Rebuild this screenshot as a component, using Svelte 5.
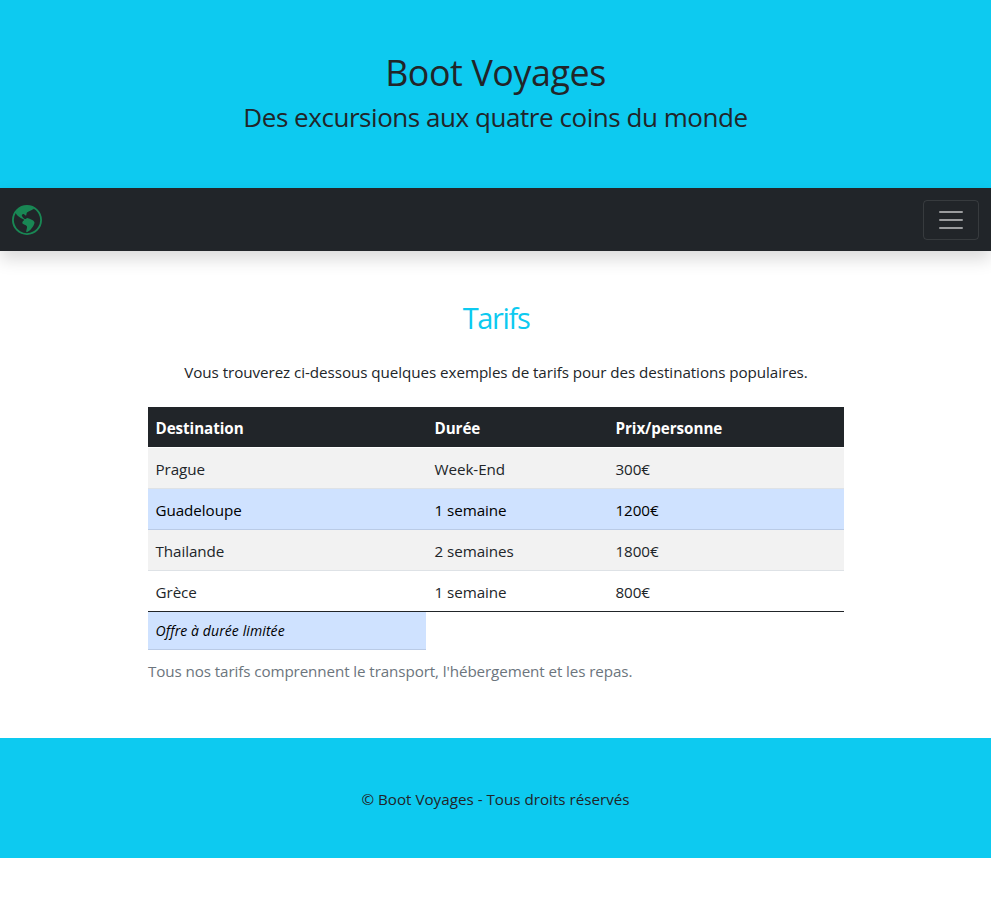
<script>
  const offers = [
    { place: 'Prague', length: 'Week-End', price: '300€' },
    { place: 'Guadeloupe', length: '1 semaine', price: '1200€', limited: true },
    { place: 'Thailande', length: '2 semaines', price: '1800€' },
    { place: 'Grèce', length: '1 semaine', price: '800€' }
  ];
</script>

<header>
  <h1>Boot Voyages</h1>
  <p>Des excursions aux quatre coins du monde</p>
</header>

<nav>
  <a href="#accueil" aria-label="Accueil">
    <svg width="30" height="30" viewBox="0 0 16 16" fill="currentColor">
      <path d="M8 0a8 8 0 1 0 0 16A8 8 0 0 0 8 0ZM2.04 4.326c.325 1.329 2.532 2.54 3.717 3.19.48.263.793.434.743.484-.08.08-.162.158-.242.234-.416.396-.787.749-.758 1.266.035.634.618.824 1.214 1.017.577.188 1.168.38 1.286.983.082.417-.075.988-.22 1.52-.215.782-.406 1.48.22 1.48 1.5-.5 3.798-3.186 4-5 .138-1.243-2-2-3.5-2.5-.478-.16-.755.081-.99.284-.172.15-.322.279-.51.216-.445-.148-2.5-2-1.5-2.5.78-.39.952-.171 1.227.182.078.099.163.208.273.318.609.304.662-.132.723-.633.039-.322.081-.671.277-.867.434-.434 1.265-.791 2.028-1.12.712-.306 1.365-.587 1.579-.88A7 7 0 1 1 2.04 4.327Z" />
    </svg>
  </a>
  <button aria-label="Menu">
    <svg width="30" height="30" viewBox="0 0 30 30" fill="none" stroke="rgba(255,255,255,.55)" stroke-width="2" stroke-linecap="round">
      <path d="M4 7h22M4 15h22M4 23h22" />
    </svg>
  </button>
</nav>

<main>
  <h2>Tarifs</h2>
  <p class="intro">Vous trouverez ci-dessous quelques exemples de tarifs pour des destinations populaires.</p>
  <table>
    <caption>Tous nos tarifs comprennent le transport, l'hébergement et les repas.</caption>
    <colgroup><col class="place" /><col class="length" /><col /></colgroup>
    <thead>
      <tr><th>Destination</th><th>Durée</th><th>Prix/personne</th></tr>
    </thead>
    <tbody>
      {#each offers as offer}
        <tr class:limited={offer.limited}>
          <td>{offer.place}</td><td>{offer.length}</td><td>{offer.price}</td>
        </tr>
      {/each}
    </tbody>
    <tfoot>
      <tr><td class="note">Offre à durée limitée</td></tr>
    </tfoot>
  </table>
</main>

<footer>© Boot Voyages - Tous droits réservés</footer>

<style>
  :global(body) {
    margin: 0;
    background: #fff;
    color: #212529;
    font: 15.2px/24px 'Open Sans', 'Noto Sans', sans-serif;
    letter-spacing: -0.06px;
  }
  h1, h2, p { margin: 0; font-weight: 400; }
  header {
    box-sizing: border-box;
    height: 188px;
    padding-top: 48px;
    background: #0dcaf0;
    text-align: center;
  }
  h1 { height: 52px; font-size: 35.8px; line-height: 48px; letter-spacing: -0.4px; }
  header p { font-size: 26px; line-height: 34px; letter-spacing: -0.45px; }
  nav {
    position: relative;
    display: flex;
    align-items: center;
    justify-content: space-between;
    box-sizing: border-box;
    height: 63px;
    padding: 1px 12px 0;
    background: #212529;
    box-shadow: 0 8px 16px rgba(0, 0, 0, .15);
  }
  nav a { display: flex; color: #198754; }
  nav svg { display: block; }
  button {
    width: 56px;
    height: 40px;
    padding: 4px 12px;
    border: 1px solid rgba(255, 255, 255, .1);
    border-radius: 4px;
    background: transparent;
  }
  main { width: 696px; margin: 0 auto; padding: 48px 0; position: relative; left: 0.5px; }
  h2 {
    margin-bottom: 24px;
    color: #0dcaf0;
    font-size: 29px;
    line-height: 37px;
    letter-spacing: -1.35px;
    text-align: center;
  }
  .intro { margin-bottom: 23px; text-align: center; }
  table {
    width: 100%;
    border-collapse: separate;
    border-spacing: 0;
    table-layout: fixed;
    caption-side: bottom;
  }
  caption { padding: 9px 0 7px; color: #6c757d; text-align: left; letter-spacing: -0.1px; }
  .place { width: 278px; }
  .length { width: 181px; }
  th, td {
    height: 24px;
    padding: 9px 8px 7px 8.5px;
    border-bottom: 1px solid #dee2e6;
    text-align: left;
  }
  th:first-child, td:first-child { padding-left: 7.5px; }
  th {
    border-bottom-color: #fff;
    background: #212529;
    color: #fff;
    font-weight: 700;
  }
  tbody tr:nth-child(odd) td { background: #f2f2f2; }
  .limited td, .note { background: #cfe2ff; color: #000; border-bottom-color: #bacbe6; }
  tbody tr:last-child td { border-bottom-color: #212529; }
  .note { height: 21px; padding-top: 8px; padding-bottom: 8px; font-size: 14px; line-height: 21px; font-style: italic; letter-spacing: 0.1px; }
  footer { padding: 49px 0 47px; background: #0dcaf0; text-align: center; letter-spacing: 0; }
</style>
